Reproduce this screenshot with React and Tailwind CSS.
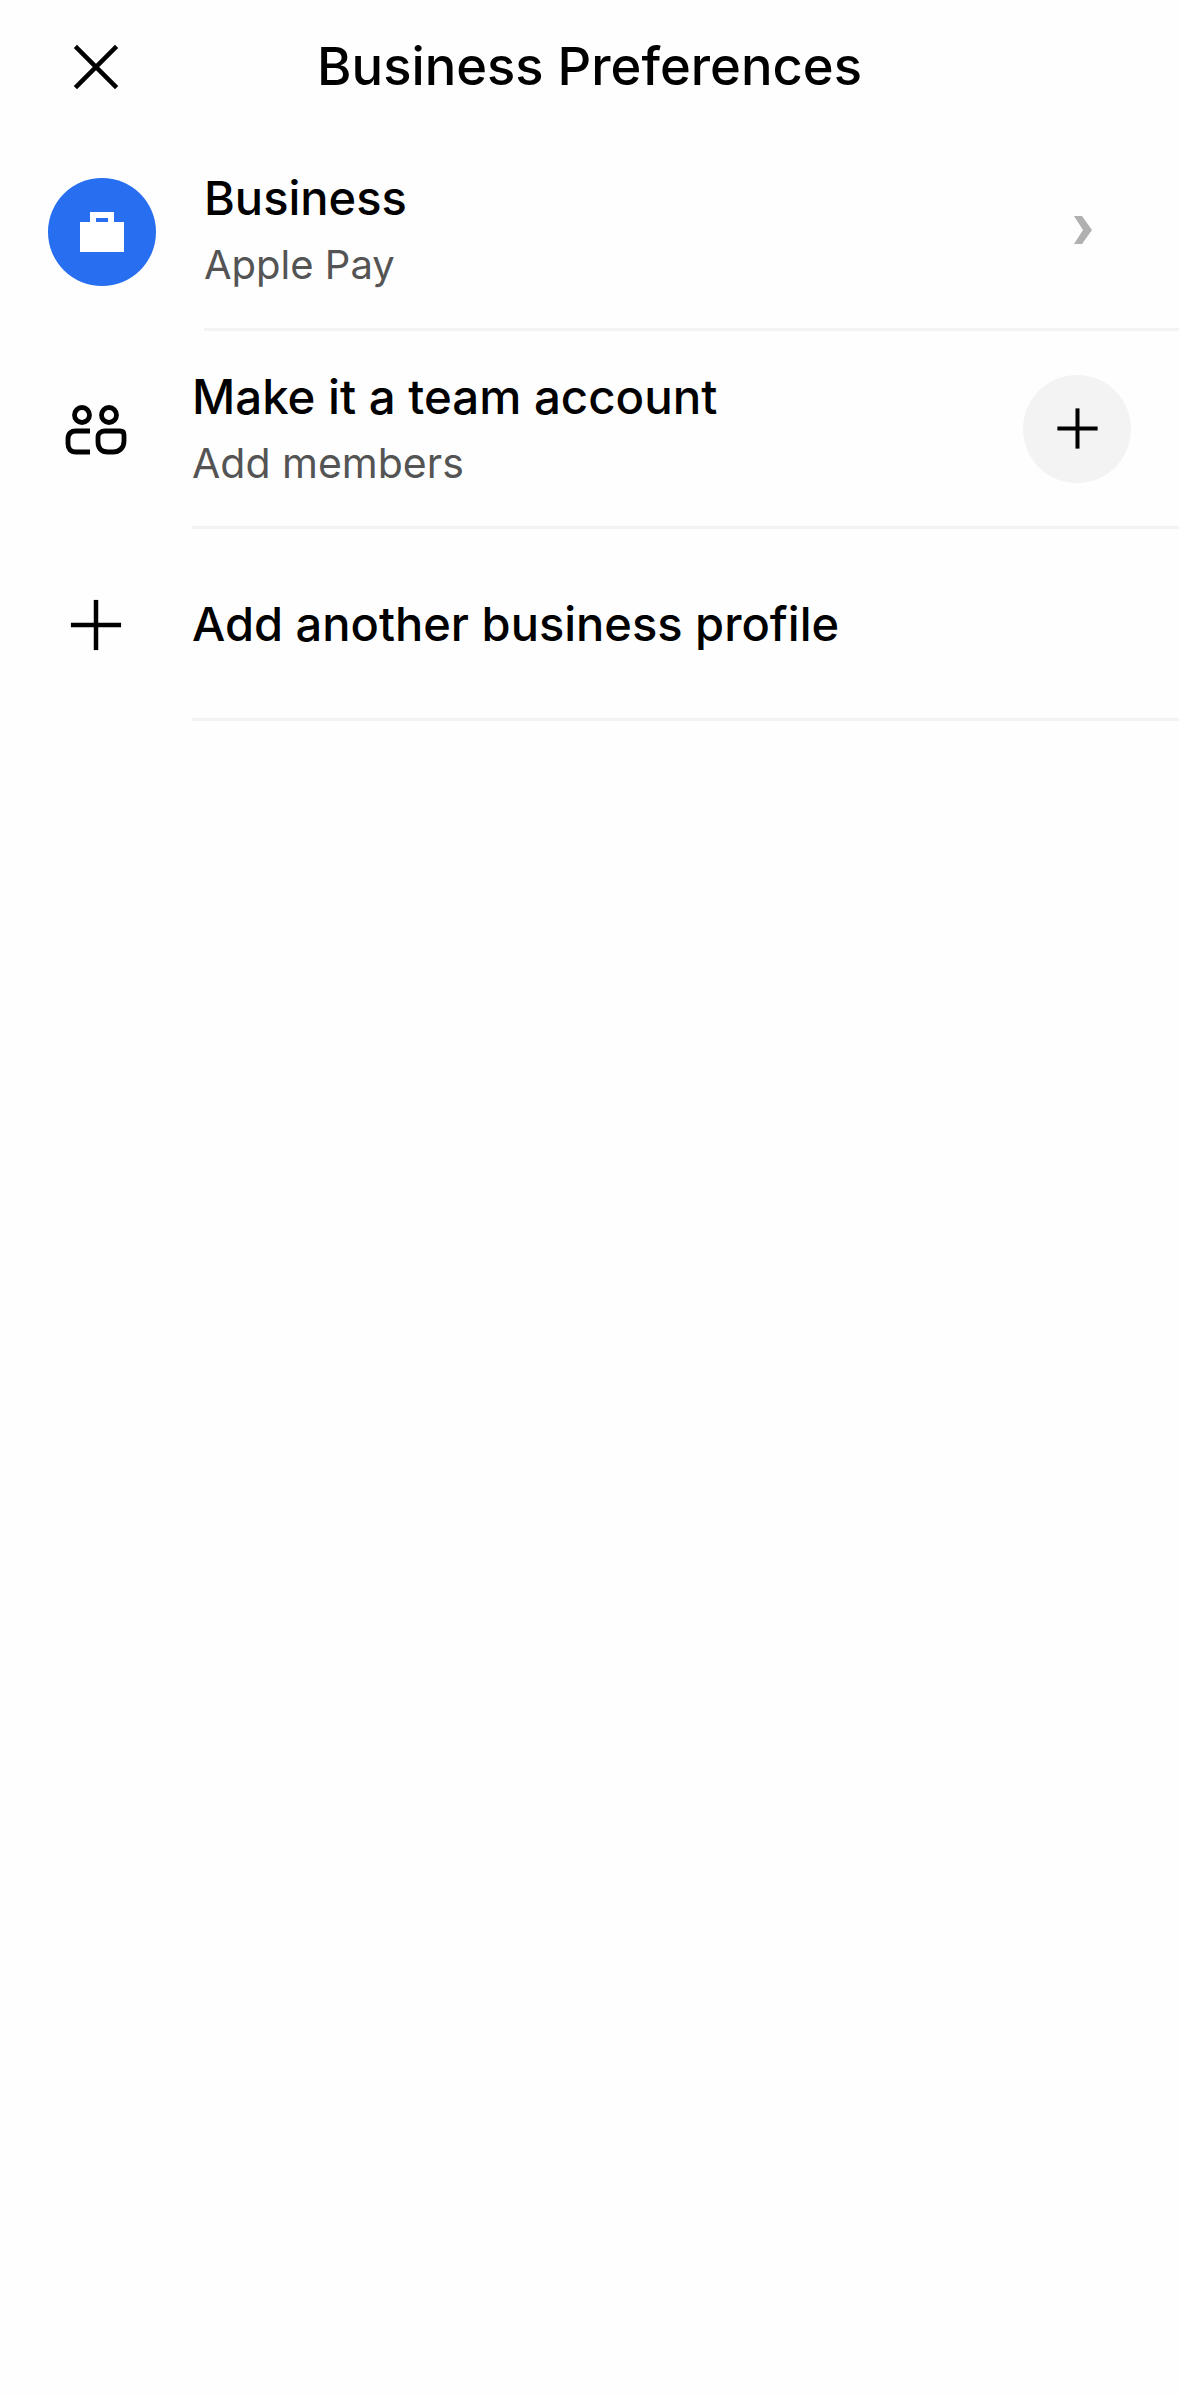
import { X, Plus } from "lucide-react";

function Briefcase() {
  return (
    <svg width="44" height="40" viewBox="0 0 44 40" fill="none">
      <path
        fillRule="evenodd"
        d="M10 0h24v10h10v30H0V10h10V0Zm6 6v4h12V6H16Z"
        fill="#ffffff"
      />
    </svg>
  );
}

function TeamIcon() {
  return (
    <svg width="62" height="52" viewBox="0 0 62 52" fill="none" stroke="#000" strokeWidth="4.8">
      <circle cx="17" cy="11" r="7.500" />
      <circle cx="44" cy="11" r="7.500" />
      <path d="M25 48H11C5.500 48 3 45 3 40V35C3 29 6 27 11 27H25" />
      <path d="M40 27H55C58 27 59 28.500 59 31V37C59 44 54 48 48 48H43C36 48 33 44 33 38V33C33 29 36 27 40 27Z" />
    </svg>
  );
}

function Chevron() {
  return (
    <svg width="18" height="28" viewBox="0 0 18 28">
      <path d="M0 0h8l10 14L8 28H0l9-14L0 0Z" fill="#b0b0b0" />
    </svg>
  );
}

export default function App() {
  return (
    <div className="min-h-[2396px] w-[1179px] bg-[#fefefe] text-black font-['Inter',sans-serif]">
      {/* Header */}
      <div className="grid grid-cols-[192px_1fr_192px] items-center h-[132px]">
        <div className="flex justify-center">
          <X size={76} strokeWidth={1.45} color="#000" strokeLinecap="square" className="mt-[1px]" />
        </div>
        <h1 className="text-center text-[52.500px] font-medium leading-none">Business Preferences</h1>
      </div>

      {/* Business */}
      <div className="flex h-[199px]">
        <div className="w-[204px] pl-[48px] pt-[46px] shrink-0">
          <div className="w-[108px] h-[108px] rounded-full bg-[#276ef1] flex items-center justify-center">
            <Briefcase />
          </div>
        </div>
        <div className="flex-1 flex items-center justify-between border-b-[3px] border-[#f3f3f3] pr-[87px]">
          <div>
            <div className="text-[47px] font-medium leading-[56px]">Business</div>
            <div className="text-[40px] leading-[50px] text-[#545454] mt-[14px]">Apple Pay</div>
          </div>
          <Chevron />
        </div>
      </div>

      {/* Team account */}
      <div className="flex h-[198px]">
        <div className="w-[192px] shrink-0 flex items-center pl-[65px]">
          <TeamIcon />
        </div>
        <div className="flex-1 flex items-center justify-between border-b-[3px] border-[#f3f3f3] pr-[48px]">
          <div>
            <div className="text-[47.400px] font-medium leading-[56px]">Make it a team account</div>
            <div className="text-[41px] leading-[50px] text-[#545454] mt-[13px]">Add members</div>
          </div>
          <div className="w-[108px] h-[108px] rounded-full bg-[#f3f3f3] flex items-center justify-center">
            <Plus size={69} strokeWidth={1.4} strokeLinecap="butt" color="#000" />
          </div>
        </div>
      </div>

      {/* Add profile */}
      <div className="flex h-[192px]">
        <div className="w-[192px] shrink-0 flex items-center justify-center">
          <Plus size={86} strokeWidth={1.25} strokeLinecap="butt" color="#000" />
        </div>
        <div className="flex-1 flex items-center border-b-[3px] border-[#f3f3f3]">
          <div className="text-[47px] font-medium leading-[56px]">Add another business profile</div>
        </div>
      </div>
    </div>
  );
}
